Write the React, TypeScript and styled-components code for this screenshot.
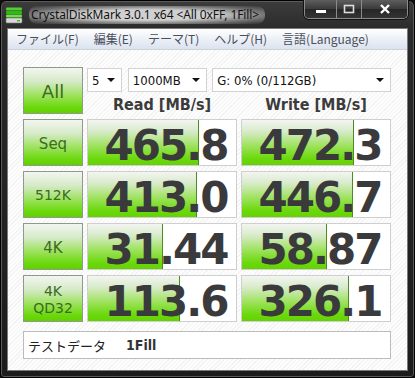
import React from "react";
import styled, { createGlobalStyle } from "styled-components";

const Global = createGlobalStyle`
  html, body { margin: 0; padding: 0; }
  body { width: 415px; height: 378px; overflow: hidden; background: #101010; }
`;

const Window = styled.div`
  width: 415px;
  height: 378px;
  box-sizing: border-box;
  display: flex;
  flex-direction: column;
  background: linear-gradient(to bottom, #3c3c3c 0px, #2a2a2a 30px, #1c1c1c 100%);
  border: 1px solid #000;
  border-radius: 6px 6px 4px 4px;
  box-shadow: inset 0 0 0 1px #5a5a5a;
`;

const TitleBar = styled.div`
  height: 27px;
  display: flex;
  align-items: flex-start;
  position: relative;
`;

const TitleLeft = styled.div`
  display: flex;
  align-items: center;
  gap: 6px;
  padding: 3px 0 0 4px;
  height: 22px;
`;

const TitleText = styled.span`
  font-family: "Noto Sans", "Liberation Sans", sans-serif;
  font-size: 12px;
  color: #111;
  padding: 0 6px 0 2px;
  border-radius: 8px;
  background: radial-gradient(ellipse at center, rgba(225,225,225,0.9) 40%, rgba(160,160,160,0.5) 75%, rgba(120,120,120,0) 100%);
  line-height: 18px;
  letter-spacing: -0.1px;
`;

const Caption = styled.div`
  position: absolute;
  top: -1px;
  right: 6px;
  display: flex;
  border: 1px solid #8a8a8a;
  border-top: none;
  border-radius: 0 0 5px 5px;
  overflow: hidden;
  box-shadow: 0 0 0 1px #111;
`;

const CapBtn = styled.div<{ $w: number; $last?: boolean }>`
  width: ${(p) => p.$w}px;
  height: 18px;
  display: flex;
  align-items: center;
  justify-content: center;
  background: linear-gradient(to bottom, #5e5e5e 0%, #3a3a3a 50%, #262626 51%, #343434 100%);
  border-right: ${(p) => (p.$last ? "none" : "1px solid #8a8a8a")};
`;

const Client = styled.div`
  margin: 0 6px 0 6px;
  height: 343px;
  box-sizing: border-box;
  border: 1px solid #7a7a7a;
  display: flex;
  flex-direction: column;
  background: repeating-linear-gradient(135deg, #fdfdfd 0 2px, #f3f3f3 2px 3px);
`;

const MenuBar = styled.div`
  height: 20px;
  display: flex;
  align-items: center;
  gap: 0;
  padding-left: 8px;
  background: linear-gradient(to bottom, #ffffff 0%, #eef2f8 45%, #dbe3ef 100%);
  border-bottom: 1px solid #c9d2df;
`;

const MenuItem = styled.span`
  font-family: "Noto Sans CJK JP", "Noto Sans", sans-serif;
  font-size: 12px;
  color: #4a4f5a;
  padding: 0 7px 0 0;
  margin-right: 8px;
  line-height: 20px;
`;

const Body = styled.div`
  padding: 17px 0 0 15px;
  display: grid;
  grid-template-columns: 60px 150px 150px;
  grid-auto-rows: 47px;
  column-gap: 4px;
  row-gap: 5px;
`;

const LabelBtn = styled.div<{ $size?: number }>`
  box-sizing: border-box;
  border: 1px solid #8e9a8c;
  background: linear-gradient(to bottom, #f3f6f1 0%, #d6eac8 30%, #9be25a 62%, #6ad80c 88%, #62d000 100%);
  display: flex;
  align-items: center;
  justify-content: center;
  text-align: center;
  white-space: pre;
  font-family: "DejaVu Sans", Verdana, sans-serif;
  font-size: ${(p) => p.$size ?? 14}px;
  line-height: 1.2;
  color: #3c6b23;
  padding-top: 2px;
`;

const TopCell = styled.div`
  grid-column: 2 / 4;
  display: flex;
  flex-direction: column;
`;

const SelectRow = styled.div`
  display: flex;
  margin-top: 1px;
`;

const Select = styled.div<{ $w: number; $gap: number }>`
  width: ${(p) => p.$w}px;
  margin-right: ${(p) => p.$gap}px;
  height: 24px;
  box-sizing: border-box;
  border: 1px solid #d2d2d2;
  background: #fff;
  display: flex;
  align-items: center;
  justify-content: space-between;
  padding: 0 6px 0 4px;
  font-family: "DejaVu Sans", Verdana, sans-serif;
  font-stretch: condensed;
  font-size: 13px;
  color: #111;
`;

const Arrow = styled.span`
  width: 0;
  height: 0;
  border-left: 4px solid transparent;
  border-right: 4px solid transparent;
  border-top: 4px solid #111;
`;

const HeaderRow = styled.div`
  display: grid;
  grid-template-columns: 150px 150px;
  column-gap: 4px;
  margin-top: 3px;
`;

const Header = styled.div`
  text-align: center;
  font-family: "DejaVu Sans", Verdana, sans-serif;
  font-stretch: condensed;
  font-weight: bold;
  font-size: 16px;
  line-height: 20px;
  color: #3b3b3b;
`;

const ValueBox = styled.div`
  position: relative;
  box-sizing: border-box;
  border: 1px solid #cfcfcf;
  background: #fff;
`;

const Fill = styled.div`
  position: absolute;
  left: 0;
  top: 0;
  bottom: 0;
  background: linear-gradient(to bottom, #f3f5f1 0%, #d8ebca 25%, #9de25c 58%, #6cd90e 85%, #64d202 100%);
  border-right: 1px solid #4f8a26;
`;

const ValueText = styled.div`
  position: relative;
  height: 100%;
  box-sizing: border-box;
  display: flex;
  align-items: center;
  justify-content: center;
  font-family: "DejaVu Sans", Verdana, sans-serif;
  font-weight: bold;
  font-size: 42px;
  line-height: 1;
  color: #3a3a3c;
  letter-spacing: -2px;
  padding: 7px 0 0 8px;
`;

const Comment = styled.div`
  grid-column: 1 / 4;
  margin-top: 4px;
  height: 28px;
  box-sizing: border-box;
  border: 1px solid #bcbcbc;
  background: #fff;
  display: flex;
  align-items: center;
  padding-left: 4px;
  font-family: "Noto Sans CJK JP", sans-serif;
  font-size: 13px;
  color: #222;
`;

const Bold = styled.b`
  font-family: "DejaVu Sans", Verdana, sans-serif;
  font-stretch: condensed;
  font-size: 14px;
  margin-left: 20px;
  color: #333;
`;

const rows = [
  { label: "Seq", read: "465.8", rf: 110, write: "472.3", wf: 111 },
  { label: "512K", read: "413.0", rf: 108, write: "446.7", wf: 110 },
  { label: "4K", read: "31.44", rf: 74, write: "58.87", wf: 84 },
  { label: "4K\nQD32", read: "113.6", rf: 91, write: "326.1", wf: 106 },
];

const AppIcon = () => (
  <svg width="18" height="17" viewBox="0 0 18 17">
    <rect x="1" y="0.5" width="16" height="3" rx="1" fill="#4fd12a" />
    <rect x="1" y="4" width="16" height="3" rx="1" fill="#2fb81c" />
    <rect x="1" y="7.5" width="16" height="3" rx="1" fill="#6be23f" />
    <rect x="1" y="11" width="16" height="5" rx="1" fill="#d8d8d8" stroke="#777" strokeWidth="0.6" />
    <rect x="12" y="13" width="3" height="1.4" fill="#3cc020" />
  </svg>
);

export default function App() {
  return (
    <>
      <Global />
      <Window>
        <TitleBar>
          <TitleLeft>
            <AppIcon />
            <TitleText>CrystalDiskMark 3.0.1 x64 &lt;All 0xFF, 1Fill&gt;</TitleText>
          </TitleLeft>
          <Caption>
            <CapBtn $w={31}>
              <svg width="12" height="10" viewBox="0 0 12 10">
                <rect x="1" y="6" width="10" height="3" fill="#fff" />
              </svg>
            </CapBtn>
            <CapBtn $w={24}>
              <svg width="12" height="10" viewBox="0 0 12 10">
                <rect x="1.5" y="1.5" width="9" height="7" fill="none" stroke="#ddd" strokeWidth="1.6" />
              </svg>
            </CapBtn>
            <CapBtn $w={45} $last>
              <svg width="12" height="10" viewBox="0 0 12 10">
                <path d="M2 1 L10 9 M10 1 L2 9" stroke="#fff" strokeWidth="2.4" />
              </svg>
            </CapBtn>
          </Caption>
        </TitleBar>
        <Client>
          <MenuBar>
            <MenuItem>ファイル(F)</MenuItem>
            <MenuItem>編集(E)</MenuItem>
            <MenuItem>テーマ(T)</MenuItem>
            <MenuItem>ヘルプ(H)</MenuItem>
            <MenuItem>言語(Language)</MenuItem>
          </MenuBar>
          <Body>
            <LabelBtn $size={18}>All</LabelBtn>
            <TopCell>
              <SelectRow>
                <Select $w={35} $gap={6}>5<Arrow /></Select>
                <Select $w={80} $gap={5}>1000MB<Arrow /></Select>
                <Select $w={180} $gap={0}>G: 0% (0/112GB)<Arrow /></Select>
              </SelectRow>
              <HeaderRow>
                <Header>Read [MB/s]</Header>
                <Header>Write [MB/s]</Header>
              </HeaderRow>
            </TopCell>
            {rows.map((r) => (
              <React.Fragment key={r.label}>
                <LabelBtn $size={r.label.length > 3 ? 14 : 15}>{r.label}</LabelBtn>
                <ValueBox>
                  <Fill style={{ width: r.rf }} />
                  <ValueText>{r.read}</ValueText>
                </ValueBox>
                <ValueBox>
                  <Fill style={{ width: r.wf }} />
                  <ValueText>{r.write}</ValueText>
                </ValueBox>
              </React.Fragment>
            ))}
            <Comment>
              テストデータ<Bold>1Fill</Bold>
            </Comment>
          </Body>
        </Client>
      </Window>
    </>
  );
}
